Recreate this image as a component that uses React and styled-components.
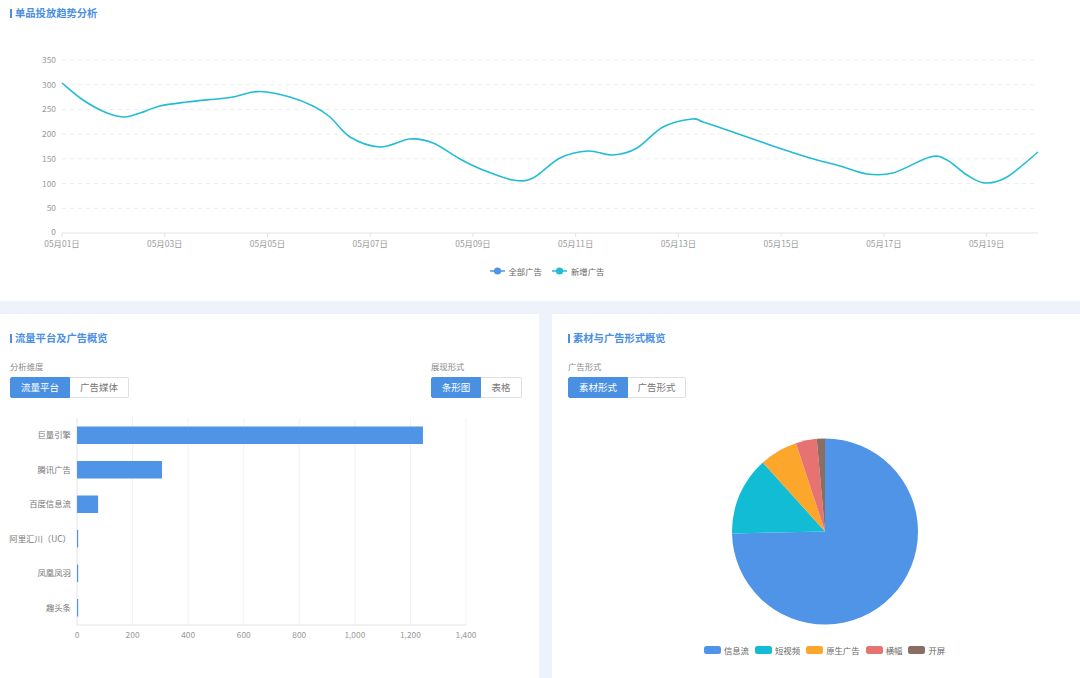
import React from 'react';
import styled, {createGlobalStyle} from 'styled-components';

const BLUE = '#4f94e7';
const CYAN = '#22bdd4';

const GlobalStyle = createGlobalStyle`
    html, body {
        margin: 0;
        padding: 0;
        height: 678px;
        overflow: hidden;
        background: #eef2fa;
    }
    body {
        font-family: "Noto Sans CJK SC", "Noto Sans", sans-serif;
    }
    #root {
        height: 678px;
    }
`;

const Page = styled.div`
    width: 1080px;
    height: 678px;
    display: flex;
    flex-direction: column;
    gap: 13px;
`;

const TopPanel = styled.section`
    flex-shrink: 0;
    height: 301px;
    background: #fff;
    display: flex;
    flex-direction: column;
`;

const BottomRow = styled.div`
    flex: 1;
    min-height: 0;
    display: grid;
    grid-template-columns: 539px 528px;
    gap: 13px;
`;

const Panel = styled.section`
    background: #fff;
    display: flex;
    flex-direction: column;
    overflow: hidden;
`;

const Title = styled.h2`
    margin: 0;
    padding: ${p => p.$top}px 0 0 ${p => p.$inset}px;
    display: flex;
    align-items: center;
    font-size: 10.3px;
    line-height: 16px;
    font-weight: 700;
    color: #4a8fe3;

    &::before {
        content: "";
        width: 2px;
        height: 9px;
        margin-right: 3px;
        background: #4a8fe3;
    }
`;

const Controls = styled.div`
    display: flex;
    justify-content: space-between;
    margin-top: 14px;
    padding: 0 17px 0 ${p => p.$inset}px;
`;

const FieldLabel = styled.div`
    font-size: 8.4px;
    line-height: 12px;
    color: #888;
    margin-bottom: 5px;
`;

const Segmented = styled.div`
    display: flex;
    height: 21px;
`;

const SegButton = styled.button`
    width: ${p => p.$w}px;
    height: 21px;
    padding: 0;
    border: 1px solid ${p => (p.$active ? '#4a90e2' : '#dcdfe6')};
    background: ${p => (p.$active ? '#4a90e2' : '#fff')};
    color: ${p => (p.$active ? '#fff' : '#777')};
    font-family: inherit;
    font-size: 9.5px;
    line-height: 19px;

    &:first-child {
        border-radius: 2px 0 0 2px;
    }
    &:last-child {
        border-radius: 0 2px 2px 0;
        border-left: none;
    }
`;

const ChartSvg = styled.svg`
    display: block;
    flex-shrink: 0;
    font-family: "Noto Sans CJK SC", "Noto Sans", sans-serif;
`;

const AxisText = styled.text`
    font-size: 8.4px;
    fill: #9a9a9a;
`;

const CategoryText = styled.text`
    font-size: 8.4px;
    fill: #777;
`;

const Legend = styled.div`
    display: flex;
    justify-content: center;
    align-items: center;
    gap: ${p => p.$gap}px;
    height: 14px;
    margin-top: ${p => p.$top}px;
    padding-left: ${p => p.$shift}px;
`;

const LegendItem = styled.div`
    display: flex;
    align-items: center;
    gap: ${p => p.$gap}px;
    font-size: 8.4px;
    line-height: 14px;
    color: #666;
    white-space: nowrap;
`;

const Swatch = styled.span`
    width: 17px;
    height: 8px;
    border-radius: 2.5px;
    background: ${p => p.$color};
`;

const LineMark = ({color}) => (
    <svg width="15" height="8" viewBox="0 0 15 8">
        <line x1="0" y1="4" x2="15" y2="4" stroke={color} strokeWidth="1.5"/>
        <circle cx="7.5" cy="4" r="3.6" fill={color}/>
    </svg>
);

// ---------- line chart ----------
const trend = [
    [62, 83], [83, 100], [107, 113], [125, 117], [140, 113], [160, 106], [187, 102], [217, 99],
    [233, 97], [253, 92], [267, 92], [290, 97], [313, 106], [330, 117], [350, 137], [380, 147],
    [410, 139], [433, 143], [460, 159], [483, 170], [513, 180], [533, 178], [560, 158], [588, 151],
    [613, 155], [637, 148], [663, 127], [692, 119], [703, 122], [727, 130], [770, 145], [810, 158],
    [840, 166], [867, 174], [893, 173], [930, 157], [947, 160], [967, 175], [985, 183], [1007, 177],
    [1038, 152],
];

const smoothPath = (pts) => {
    let d = `M${pts[0][0]},${pts[0][1]}`;
    for (let i = 0; i < pts.length - 1; i++) {
        const p0 = pts[i - 1] || pts[i];
        const p1 = pts[i];
        const p2 = pts[i + 1];
        const p3 = pts[i + 2] || p2;
        const c1 = [p1[0] + (p2[0] - p0[0]) / 6, p1[1] + (p2[1] - p0[1]) / 6];
        const c2 = [p2[0] - (p3[0] - p1[0]) / 6, p2[1] - (p3[1] - p1[1]) / 6];
        d += ` C${c1[0].toFixed(1)},${c1[1].toFixed(1)} ${c2[0].toFixed(1)},${c2[1].toFixed(1)} ${p2[0]},${p2[1]}`;
    }
    return d;
};

const LINE_X0 = 62;
const LINE_X1 = 1038;
const LINE_Y0 = 233;
const DAY = (LINE_X1 - LINE_X0) / 19;
const yOf = v => LINE_Y0 - v * (173 / 350);

const TrendChart = () => {
    const ticks = [0, 50, 100, 150, 200, 250, 300, 350];
    const days = Array.from({length: 20}, (_, i) => i);
    return (
        <ChartSvg width="1080" height="237" viewBox="0 21 1080 237">
            {ticks.slice(1).map(v => (
                <line key={v} x1={LINE_X0} x2={LINE_X1} y1={yOf(v)} y2={yOf(v)}
                      stroke="#ececec" strokeDasharray="4 4" strokeWidth="1"/>
            ))}
            <line x1={LINE_X0} x2={LINE_X1} y1={LINE_Y0} y2={LINE_Y0} stroke="#e3e3e3"/>
            {ticks.map(v => (
                <AxisText key={v} x="56" y={yOf(v) - (v === 0 ? 1 : 0)} dy="0.35em" textAnchor="end">{v}</AxisText>
            ))}
            {days.filter(i => i % 2 === 0).map(i => {
                const x = LINE_X0 + i * DAY;
                const label = `05月${String(i + 1).padStart(2, '0')}日`;
                return (
                    <g key={i}>
                        <line x1={x} x2={x} y1={LINE_Y0} y2={LINE_Y0 + 4} stroke="#e3e3e3"/>
                        <AxisText x={x} y="244" dy="0.35em" textAnchor="middle">{label}</AxisText>
                    </g>
                );
            })}
            <path d={smoothPath(trend)} fill="none" stroke={CYAN} strokeWidth="1.6"/>
        </ChartSvg>
    );
};

// ---------- bar chart ----------
const platforms = [
    {name: '巨量引擎', value: 1245},
    {name: '腾讯广告', value: 306},
    {name: '百度信息流', value: 76},
    {name: '阿里汇川（UC）', value: 3},
    {name: '凤凰凤羽', value: 2},
    {name: '趣头条', value: 1},
];

const BAR_X0 = 77;
const BAR_X1 = 466;
const BAR_TOP = 418;
const BAR_BOTTOM = 625;

const PlatformChart = () => {
    const scale = (BAR_X1 - BAR_X0) / 1400;
    const band = (BAR_BOTTOM - BAR_TOP) / platforms.length;
    const grid = [0, 200, 400, 600, 800, 1000, 1200, 1400];
    return (
        <ChartSvg width="539" height="280" viewBox="0 398 539 280">
            {grid.map(v => (
                <line key={v} x1={BAR_X0 + v * scale} x2={BAR_X0 + v * scale} y1={BAR_TOP} y2={BAR_BOTTOM}
                      stroke={v === 0 ? '#e3e3e3' : '#f1f1f1'}/>
            ))}
            <line x1={BAR_X0} x2={BAR_X1} y1={BAR_BOTTOM} y2={BAR_BOTTOM} stroke="#e3e3e3"/>
            {grid.map(v => (
                <AxisText key={v} x={BAR_X0 + v * scale} y={BAR_BOTTOM + 10} dy="0.35em" textAnchor="middle">
                    {v.toLocaleString('en-US')}
                </AxisText>
            ))}
            {platforms.map((p, i) => {
                const cy = BAR_TOP + band * (i + 0.5);
                return (
                    <g key={p.name}>
                        <rect x={BAR_X0} y={cy - 8.75} height="17.5" width={Math.max(1.2, p.value * scale)} fill={BLUE}/>
                        <CategoryText x="71" y={cy} dy="0.35em" textAnchor="end">{p.name}</CategoryText>
                    </g>
                );
            })}
        </ChartSvg>
    );
};

// ---------- pie chart ----------
const formats = [
    {name: '信息流', to: 268.8, color: BLUE},
    {name: '短视频', to: 318, color: '#12bcd5'},
    {name: '原生广告', to: 341.8, color: '#fca62b'},
    {name: '横幅', to: 354.9, color: '#e77272'},
    {name: '开屏', to: 360, color: '#8c6d61'},
];

const PIE_CX = 273;
const PIE_CY = 531.5;
const PIE_R = 93;

const polar = deg => {
    const a = (deg - 90) * Math.PI / 180;
    return [PIE_CX + PIE_R * Math.cos(a), PIE_CY + PIE_R * Math.sin(a)];
};

const FormatPie = () => {
    let from = 0;
    return (
        <ChartSvg width="528" height="242" viewBox="0 398 528 242">
            {formats.map(f => {
                const [x0, y0] = polar(from);
                const [x1, y1] = polar(f.to);
                const large = f.to - from > 180 ? 1 : 0;
                const d = `M${PIE_CX},${PIE_CY} L${x0},${y0} A${PIE_R},${PIE_R} 0 ${large} 1 ${x1},${y1} Z`;
                from = f.to;
                return <path key={f.name} d={d} fill={f.color}/>;
            })}
        </ChartSvg>
    );
};

export default function App() {
    return (
        <>
            <GlobalStyle/>
            <Page>
                <TopPanel>
                    <Title $top={5} $inset={10}>单品投放趋势分析</Title>
                    <TrendChart/>
                    <Legend $top={6} $gap={10} $shift={14}>
                        <LegendItem $gap={4}><LineMark color={BLUE}/>全部广告</LegendItem>
                        <LegendItem $gap={4}><LineMark color={CYAN}/>新增广告</LegendItem>
                    </Legend>
                </TopPanel>
                <BottomRow>
                    <Panel>
                        <Title $top={16} $inset={10}>流量平台及广告概览</Title>
                        <Controls $inset={10}>
                            <div>
                                <FieldLabel>分析维度</FieldLabel>
                                <Segmented>
                                    <SegButton $active $w={60}>流量平台</SegButton>
                                    <SegButton $w={59}>广告媒体</SegButton>
                                </Segmented>
                            </div>
                            <div>
                                <FieldLabel>展现形式</FieldLabel>
                                <Segmented>
                                    <SegButton $active $w={50}>条形图</SegButton>
                                    <SegButton $w={41}>表格</SegButton>
                                </Segmented>
                            </div>
                        </Controls>
                        <PlatformChart/>
                    </Panel>
                    <Panel>
                        <Title $top={16} $inset={16}>素材与广告形式概览</Title>
                        <Controls $inset={16}>
                            <div>
                                <FieldLabel>广告形式</FieldLabel>
                                <Segmented>
                                    <SegButton $active $w={60}>素材形式</SegButton>
                                    <SegButton $w={58}>广告形式</SegButton>
                                </Segmented>
                            </div>
                        </Controls>
                        <FormatPie/>
                        <Legend $top={3} $gap={6} $shift={17}>
                            {formats.map(f => (
                                <LegendItem key={f.name} $gap={3}>
                                    <Swatch $color={f.color}/>{f.name}
                                </LegendItem>
                            ))}
                        </Legend>
                    </Panel>
                </BottomRow>
            </Page>
        </>
    );
}
